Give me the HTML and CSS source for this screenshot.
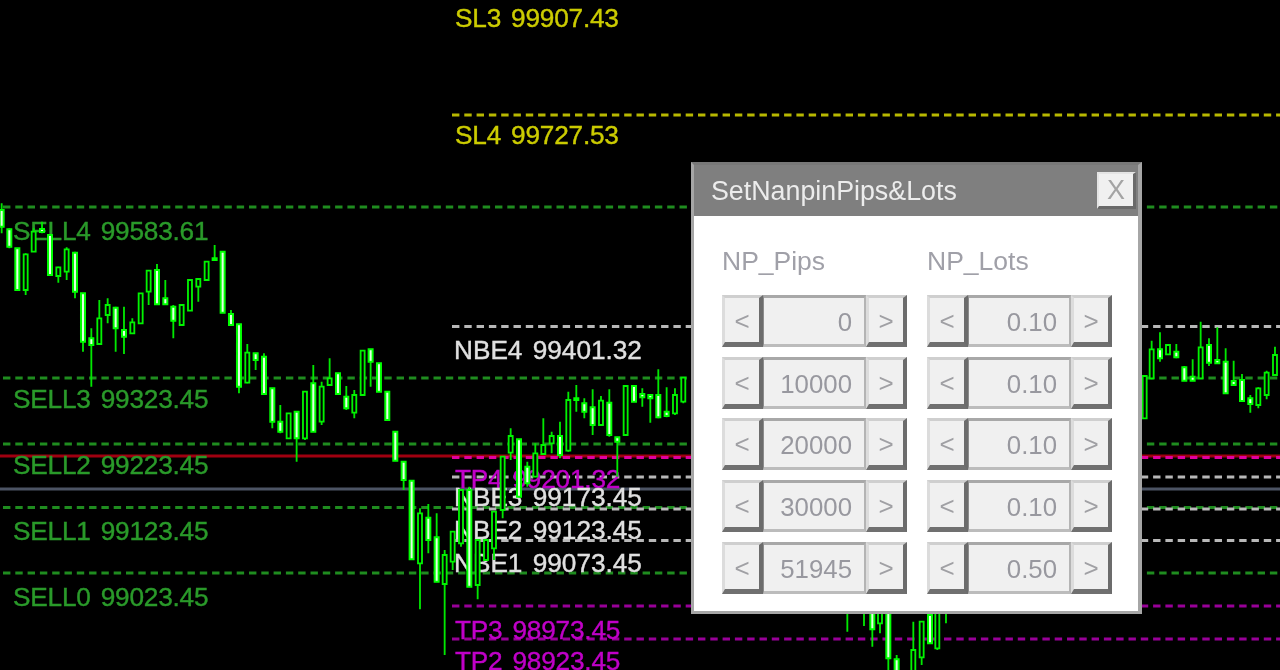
FILE: index.html
```html
<!DOCTYPE html>
<html lang="en">
<head>
<meta charset="utf-8">
<title>SetNanpinPips&amp;Lots</title>
<link rel="stylesheet" href="styles.css">
</head>
<body>
<main class="stage">
  <svg class="chart" width="1280" height="670" viewBox="0 0 1280 670" aria-label="Price chart">
    <path class="ln ln-yellow" d="M452 115H1280"/>
    <path class="ln ln-green" d="M3 207H1280M3 378H1280M3 444H1280M3 507.5H1280M3 573H1280"/>
    <path class="ln ln-white" d="M452 326.500H1280M452 477H1280M452 509H1280M452 540.500H1280"/>
    <path class="ln-solid ln-red" d="M0 456H1280"/>
    <path class="ln-solid ln-slate" d="M0 489H1280"/>
    <path class="ln ln-pink" d="M452 457.500H1280"/>
    <path class="ln ln-purple" d="M452 606H1280M452 639H1280"/>

    <text class="lbl lbl-yellow" x="455" y="27">SL3 99907.43</text>
    <text class="lbl lbl-yellow" x="455" y="144">SL4 99727.53</text>
    <text class="lbl lbl-green" x="13" y="240">SELL4 99583.61</text>
    <text class="lbl lbl-green" x="13" y="407.500">SELL3 99323.45</text>
    <text class="lbl lbl-green" x="13" y="474">SELL2 99223.45</text>
    <text class="lbl lbl-green" x="13" y="539.500">SELL1 99123.45</text>
    <text class="lbl lbl-green" x="13" y="605.500">SELL0 99023.45</text>
    <text class="lbl lbl-white" x="454" y="359">NBE4 99401.32</text>
    <text class="lbl lbl-purple" x="455" y="488">TP4 99201.32</text>
    <text class="lbl lbl-white" x="454" y="506">NBE3 99173.45</text>
    <text class="lbl lbl-white" x="454" y="539">NBE2 99123.45</text>
    <text class="lbl lbl-white" x="454" y="572">NBE1 99073.45</text>
    <text class="lbl lbl-purple" x="455" y="639">TP3 98973.45</text>
    <text class="lbl lbl-purple" x="455" y="670">TP2 98923.45</text>

    <g transform="translate(0 190) scale(.3333)">
      <path class="wick" d="M5 40V130M28 115V175M52 175V300M77 190V315M101 115V185M126 95V130M150 135V255M175 230V278M200 172V270M225 185V325M249 310V485M274 415V590M298 330V465M323 325V400M347 350V485M372 350V492M397 385V432M422 310V400M446 240V345M471 222V343M496 270V345M520 345V445M545 345V405M570 270V362M595 265V335M620 215V270M644 165V210M668 185V368M693 360V405M717 403V610M742 462V580M767 490V540M792 490V612M817 595V715M841 645V730M890 665V815M915 605V750M940 525V725M965 575V705M989 505V585M1014 550V612M1039 588V660M1063 600V685M1088 482V615M1112 478V590M1137 520V605M1162 605V690M1186 725V812M1211 815V900"/>
      <path class="hollow" d="M71 193h12V300h-12zM95 125h12V185h-12zM169 232h12V258h-12zM194 178h12V245h-12zM292 385h12V462h-12zM317 345h12V375h-12zM391 397h12V430h-12zM416 310h12V400h-12zM440 242h12V305h-12zM539 345h12V405h-12zM564 270h12V362h-12zM589 267h12V290h-12zM614 215h12V270h-12zM736 488h12V578h-12zM860 670h12V745h-12zM909 605h12V745h-12zM959 590h12V695h-12zM983 565h12V585h-12zM1057 615h12V668h-12zM1082 482h12V615h-12z"/>
      <path class="solid" d="M-1 60h12V110h-12zM22 118h12V170h-12zM46 175h12V300h-12zM120 117h12V126h-12zM144 135h12V255h-12zM219 188h12V305h-12zM243 310h12V455h-12zM268 445h12V465h-12zM341 353h12V415h-12zM366 420h12V440h-12zM465 240h12V343h-12zM490 325h12V343h-12zM514 350h12V392h-12zM638 205h12V210h-12zM662 185h12V368h-12zM687 372h12V405h-12zM711 403h12V590h-12zM761 490h12V510h-12zM786 500h12V612h-12zM811 595h12V695h-12zM835 695h12V725h-12zM884 665h12V745h-12zM934 580h12V725h-12zM1008 550h12V612h-12zM1033 620h12V655h-12zM1106 478h12V515h-12zM1131 520h12V605h-12zM1156 605h12V690h-12zM1180 725h12V812h-12zM1205 815h12V870h-12zM1229 872h12V1108h-12z"/>
    </g>
    <g transform="translate(400 480) scale(.3333)">
      <path class="wick" d="M60 85V388M85 72V220M110 100V305M134 210V525M158 155V270M183 30V200M208 20V320M233 180V358M258 180V240M282 95V240"/>
      <path class="hollow" d="M54 100h12V250h-12zM128 225h12V312h-12zM152 155h12V245h-12zM177 30h12V190h-12zM227 180h12V315h-12zM252 180h12V240h-12zM276 95h12V205h-12z"/>
      <path class="solid" d="M79 113h12V180h-12zM104 172h12V305h-12zM202 30h12V320h-12z"/>
    </g>
    <g transform="translate(400 310) scale(.3333)">
      <path class="wick" d="M308 440V625M332 355V450M357 388V560M382 455V530M406 400V500M430 325V435M455 365V430M480 335V445M505 245V425M529 225V305M553 265V325M578 238V375M603 258V345M628 238V380M652 385V500M677 228V375M702 228V275M727 235V290M751 255V338M775 178V325M800 232V322M825 235V315M850 203V280"/>
      <path class="hollow" d="M302 440h12V600h-12zM326 378h12V428h-12zM400 430h12V500h-12zM424 405h12V432h-12zM449 378h12V400h-12zM499 270h12V422h-12zM597 272h12V345h-12zM671 228h12V375h-12zM819 255h12V310h-12zM844 203h12V275h-12z"/>
      <path class="solid" d="M351 388h12V560h-12zM376 470h12V520h-12zM474 378h12V435h-12zM523 265h12V270h-12zM547 280h12V305h-12zM572 292h12V345h-12zM622 278h12V375h-12zM646 382h12V395h-12zM696 228h12V275h-12zM721 252h12V262h-12zM745 255h12V265h-12zM769 255h12V322h-12zM794 305h12V318h-12z"/>
    </g>
    <g transform="translate(1130 300) scale(.3333)">
      <path class="wick" d="M65 122V238M90 97V185M139 132V175M163 198V242M188 178V242M212 65V235M237 115V198M262 82V190M287 145V280M311 182V255M336 222V305M361 285V338M385 262V325M410 212V298M435 140V228"/>
      <path class="hollow" d="M38 228h12V355h-12zM59 148h12V235h-12zM108 135h12V163h-12zM206 142h12V235h-12zM379 265h12V315h-12zM404 218h12V285h-12zM429 165h12V225h-12z"/>
      <path class="solid" d="M84 148h12V175h-12zM133 155h12V172h-12zM157 202h12V242h-12zM182 230h12V242h-12zM231 135h12V188h-12zM256 180h12V190h-12zM281 185h12V280h-12zM305 243h12V255h-12zM330 240h12V303h-12zM355 295h12V312h-12z"/>
    </g>
    <g transform="translate(820 580) scale(.3333)">
      <path class="wick" d="M82 90V155M132 90V138M157 90V200M180 90V160M205 90V270M230 225V270M280 125V270M305 125V255M330 90V192M352 90V210M378 90V130"/>
      <path class="hollow" d="M174 90h12V130h-12zM274 210h12V275h-12zM299 125h12V232h-12zM346 90h12V205h-12z"/>
      <path class="solid" d="M151 90h12V148h-12zM199 90h12V235h-12zM224 238h12V275h-12zM324 105h12V190h-12z"/>
    </g>
  </svg>

  <section class="dialog">
    <header class="dialog-bar">
      <h1 class="dialog-title">SetNanpinPips&amp;Lots</h1>
      <button class="close" type="button">X</button>
    </header>
    <div class="dialog-body">
      <div class="col">
        <div class="col-head">NP_Pips</div>
        <div class="spin"><button class="step" type="button">&lt;</button><div class="val">0</div><button class="step" type="button">&gt;</button></div>
        <div class="spin"><button class="step" type="button">&lt;</button><div class="val">10000</div><button class="step" type="button">&gt;</button></div>
        <div class="spin"><button class="step" type="button">&lt;</button><div class="val">20000</div><button class="step" type="button">&gt;</button></div>
        <div class="spin"><button class="step" type="button">&lt;</button><div class="val">30000</div><button class="step" type="button">&gt;</button></div>
        <div class="spin"><button class="step" type="button">&lt;</button><div class="val">51945</div><button class="step" type="button">&gt;</button></div>
      </div>
      <div class="col">
        <div class="col-head">NP_Lots</div>
        <div class="spin"><button class="step" type="button">&lt;</button><div class="val">0.10</div><button class="step" type="button">&gt;</button></div>
        <div class="spin"><button class="step" type="button">&lt;</button><div class="val">0.10</div><button class="step" type="button">&gt;</button></div>
        <div class="spin"><button class="step" type="button">&lt;</button><div class="val">0.10</div><button class="step" type="button">&gt;</button></div>
        <div class="spin"><button class="step" type="button">&lt;</button><div class="val">0.10</div><button class="step" type="button">&gt;</button></div>
        <div class="spin"><button class="step" type="button">&lt;</button><div class="val">0.50</div><button class="step" type="button">&gt;</button></div>
      </div>
    </div>
  </section>
</main>
</body>
</html>
```
FILE: styles.css
```css
* { box-sizing: border-box; }

html, body {
  margin: 0;
  height: 100%;
  background: #000;
  overflow: hidden;
}

.stage {
  position: relative;
  width: 1280px;
  height: 670px;
  overflow: hidden;
  background: #000;
  font-family: "Liberation Sans", Arial, sans-serif;
  filter: blur(0.7px);
}

.chart { display: block; }

.ln { fill: none; stroke-width: 3; stroke-dasharray: 7.4 4.9; }
.ln-solid { fill: none; stroke-width: 3; }
.ln-yellow { stroke: #b8b800; }
.ln-green { stroke: #1f8c1f; }
.ln-white { stroke: #b8b8b8; }
.ln-red { stroke: #a00010; }
.ln-slate { stroke: #4c5464; }
.ln-pink { stroke: #e000a0; }
.ln-purple { stroke: #980098; }

.lbl {
  font-size: 26.2px;
  font-family: "Liberation Sans", Arial, sans-serif;
  word-spacing: 3px;
  letter-spacing: -0.2px;
  stroke-width: 0.4px;
}
.lbl-yellow { fill: #cccc00; stroke: #cccc00; }
.lbl-green { fill: #2a9a2a; stroke: #2a9a2a; }
.lbl-white { fill: #e0e0e0; stroke: #e0e0e0; letter-spacing: 0; }
.lbl-purple { fill: #c000c8; stroke: #c000c8; }

.wick { fill: none; stroke: #00e800; stroke-width: 5.5; }
.hollow { fill: #000; stroke: #00f400; stroke-width: 5.5; }
.solid { fill: #e4ffe4; stroke: #00ff00; stroke-width: 6; }

.dialog {
  position: absolute;
  left: 691px;
  top: 162px;
  width: 451px;
  height: 452px;
  display: flex;
  flex-direction: column;
  background: #fff;
  border: solid #a6a6a6;
  border-width: 3px 4px 3px 3px;
  border-top-color: #787878;
}

.dialog-bar {
  height: 51px;
  flex: none;
  display: flex;
  align-items: center;
  justify-content: space-between;
  padding: 4px 2px 4px 17px;
  background: #7f7f7f;
}

.dialog-title {
  margin: 2px 0 0;
  font-size: 26.8px;
  font-weight: 400;
  color: #ececec;
  line-height: 1;
}

.close {
  width: 39px;
  height: 37px;
  padding: 0;
  font: 400 27px "Liberation Sans", Arial, sans-serif;
  color: #a4a4a4;
  background: #f0f0f0;
  border: solid;
  border-width: 2px 3px 3px 2px;
  border-color: #e4e4e4 #6a6a6a #6a6a6a #e4e4e4;
}

.dialog-body {
  flex: 1;
  display: grid;
  grid-template-columns: 185px 185px;
  column-gap: 20px;
  align-content: start;
  padding: 30px 0 0 28px;
}

.col {
  display: flex;
  flex-direction: column;
  gap: 9.75px;
}

.col-head {
  height: 30px;
  margin-bottom: 9px;
  font-size: 26.5px;
  line-height: 30px;
  color: #a0a0a8;
}

.spin {
  display: grid;
  grid-template-columns: 41px 1fr 41px;
  height: 52px;
}

.step {
  padding: 3px 0 0;
  font: 400 26px "Liberation Sans", Arial, sans-serif;
  color: #a0a0a4;
  background: #f0f0f0;
  border: solid;
  border-width: 3px 4px 5px 3px;
  border-color: #cfcfcf #6c6c6c #707070 #dcdcdc;
}

.val {
  display: flex;
  align-items: center;
  justify-content: flex-end;
  padding: 3px 12px 0 0;
  font-size: 25.8px;
  color: #98989f;
  background: #f0f0f0;
  border: solid;
  border-width: 3px 2px 3px 1px;
  border-color: #a8a8a8 #b4b4b4 #bcbcbc #8c8c8c;
}
```
